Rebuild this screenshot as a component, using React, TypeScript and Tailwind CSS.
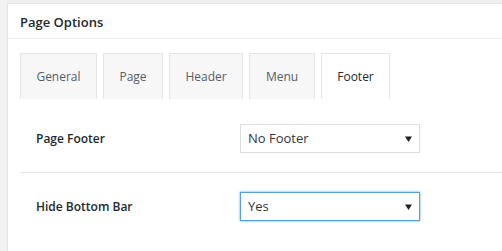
import clsx from 'clsx';

const tabs = [
    { name: 'General', width: 'w-[77px]' },
    { name: 'Page', width: 'w-[60px]' },
    { name: 'Header', width: 'w-[74px]' },
    { name: 'Menu', width: 'w-[66px]' },
    { name: 'Footer', width: 'w-[69px]' },
];

const Arrow = () => (
    <svg width="7" height="6" viewBox="0 0 7 6" className="absolute right-[7px] top-1/2 -translate-y-1/2">
        <path d="M0 0.5 L7 0.5 L3.5 6 Z" fill="#222" />
    </svg>
);

const SelectField = ({ value, focused }: { value: string; focused?: boolean }) => (
    <div
        className={clsx(
            'relative flex h-[29px] w-[180px] items-center bg-white pl-[7px] text-[13px] text-[#32373c]',
            focused ? 'border border-[#5b9dd9] shadow-[0_0_2px_rgba(30,140,190,0.8)]' : 'border border-[#dddddd]'
        )}
    >
        {value}
        <Arrow />
    </div>
);

const OptionRow = ({ label, value, focused, last }: any) => (
    <div className={clsx('flex items-center py-[19px] pl-4', { 'border-b border-[#e5e5e5]': !last })}>
        <div className="w-[204px] text-[12px] font-semibold text-[#23282d]">{label}</div>
        <SelectField value={value} focused={focused} />
    </div>
);

export default function App() {
    return (
        <div className="h-[251px] w-[502px] overflow-hidden bg-[#f1f1f1] pl-[7px] pt-[3px] font-['Open_Sans','Noto_Sans',sans-serif]">
            <div className="h-[300px] w-[520px] border border-[#e5e5e5] bg-white">
                <div className="flex h-[35px] items-center border-b border-[#eeeeee] pl-3 pt-[3px] text-[13px] font-semibold text-[#23282d]">
                    Page Options
                </div>
                <div className="pl-3 pt-[14px]">
                    <div className="flex gap-[6px]">
                        {tabs.map((tab) => {
                            const active = tab.name === 'Footer';
                            return (
                                <div
                                    key={tab.name}
                                    className={clsx(
                                        'flex h-[46px] items-center justify-center border border-b-0 border-[#e5e5e5] text-[12px]',
                                        tab.width,
                                        active ? 'bg-white text-[#23282d]' : 'bg-[#f7f7f7] text-[#555d66]'
                                    )}
                                >
                                    {tab.name}
                                </div>
                            );
                        })}
                    </div>
                    <div className="pt-[6px]">
                        <OptionRow label="Page Footer" value="No Footer" />
                        <OptionRow label="Hide Bottom Bar" value="Yes" focused last />
                    </div>
                </div>
            </div>
        </div>
    );
}
